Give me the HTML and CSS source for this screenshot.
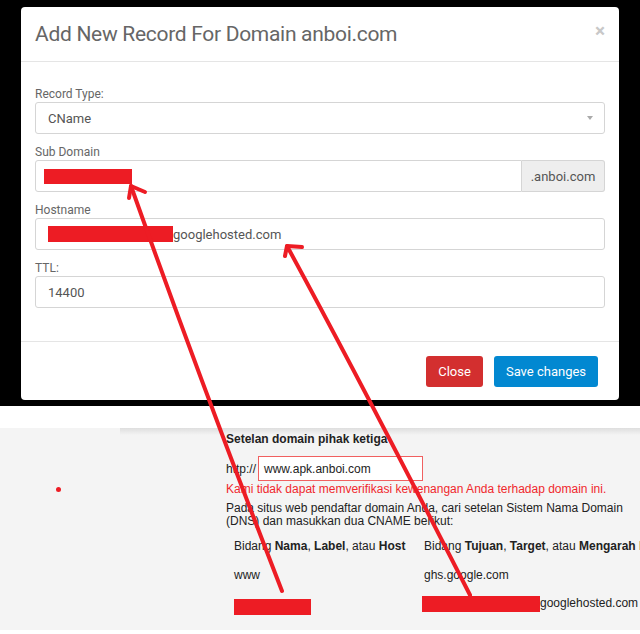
FILE: index.html
```html
<!DOCTYPE html>
<html lang="id">
<head>
  <meta charset="UTF-8">
  <title>Add New Record</title>
  <link rel="stylesheet" href="styles.css">
</head>
<body>
  <div class="backdrop">
    <div class="modal">
      <div class="modal-header">
        <h4 class="modal-title">Add New Record For Domain anboi.com</h4>
        <span class="close">&times;</span>
      </div>
      <div class="modal-body">
        <label>Record Type:</label>
        <div class="field select">
          <span>CName</span>
          <span class="caret"></span>
        </div>

        <label>Sub Domain</label>
        <div class="input-group">
          <div class="field grow"><span class="redact sub"></span></div>
          <div class="addon">.anboi.com</div>
        </div>

        <label>Hostname</label>
        <div class="field"><span class="redact host"></span><span>googlehosted.com</span></div>

        <label>TTL:</label>
        <div class="field"><span>14400</span></div>
      </div>
      <div class="modal-footer">
        <button class="btn btn-danger">Close</button>
        <button class="btn btn-primary">Save changes</button>
      </div>
    </div>
  </div>

  <div class="gap"></div>

  <div class="page">
    <div class="panel">
      <div class="heading">Setelan domain pihak ketiga</div>
      <div class="url-row">
        <span>http://</span>
        <div class="url-input">www.apk.anboi.com</div>
      </div>
      <div class="error">Kami tidak dapat memverifikasi kewenangan Anda terhadap domain ini.</div>
      <p class="info">Pada situs web pendaftar domain Anda, cari setelan Sistem Nama Domain (DNS) dan masukkan dua CNAME berikut:</p>
      <div class="cname-table">
        <div>Bidang <b>Nama</b>, <b>Label</b>, atau <b>Host</b></div>
        <div>Bidang <b>Tujuan</b>, <b>Target</b>, atau <b>Mengarah ke</b></div>
        <div>www</div>
        <div>ghs.google.com</div>
        <div><span class="redact name"></span></div>
        <div><span class="redact target"></span>googlehosted.com</div>
      </div>
    </div>
  </div>

  <span class="dot"></span>

  <svg class="arrows" width="640" height="634" viewBox="0 0 640 634">
    <g fill="none" stroke="#ed1c24" stroke-width="4" stroke-linecap="round" stroke-linejoin="round">
      <path d="M282 591 Q 200 380 131 186"/>
      <path d="M145 192 L131 186 L129 198"/>
      <path d="M470 595 Q 360 380 287 246"/>
      <path d="M302 247 L287 246 L285 256"/>
    </g>
  </svg>
</body>
</html>
```

FILE: styles.css
```css
html, body {
  margin: 0;
  padding: 0;
  width: 640px;
  height: 634px;
  overflow: hidden;
  background: #fff;
  position: relative;
}

.backdrop {
  background: #000;
  height: 406px;
  padding: 7px 21px 0;
  box-sizing: border-box;
}

.modal {
  background: #fff;
  border-radius: 4px;
  height: 393px;
  font-family: Roboto, "Liberation Sans", sans-serif;
  display: flex;
  flex-direction: column;
}

.modal-header {
  height: 54px;
  border-bottom: 1px solid #e5e5e5;
  display: flex;
  align-items: center;
  justify-content: space-between;
  padding: 0 14px;
}

.modal-title {
  margin: 0;
  font-size: 21px;
  font-weight: 400;
  color: #666;
  letter-spacing: -0.3px;
}

.close {
  color: #c8c8c8;
  font-size: 19px;
  font-weight: bold;
  margin-top: -8px;
}

.modal-body {
  padding: 25px 14px 0;
  height: 279px;
  box-sizing: border-box;
}

.modal-body label {
  display: block;
  font-size: 12px;
  line-height: 15px;
  color: #666;
}

.field {
  height: 32px;
  box-sizing: border-box;
  border: 1px solid #d5d5d5;
  border-radius: 3px;
  margin-bottom: 11px;
  display: flex;
  align-items: center;
  padding: 0 12px;
  font-size: 13px;
  color: #555;
}

.select {
  justify-content: space-between;
  padding-right: 11px;
}

.caret {
  width: 0;
  height: 0;
  border-left: 3px solid transparent;
  border-right: 3px solid transparent;
  border-top: 4px solid #aaa;
}

.input-group {
  display: flex;
  margin-bottom: 11px;
}

.input-group .field {
  margin-bottom: 0;
  border-radius: 3px 0 0 3px;
  padding-left: 8px;
}

.grow {
  flex: 1;
}

.addon {
  width: 83px;
  height: 32px;
  box-sizing: border-box;
  background: #eee;
  border: 1px solid #d5d5d5;
  border-left: none;
  border-radius: 0 3px 3px 0;
  display: flex;
  align-items: center;
  justify-content: center;
  font-size: 13px;
  color: #555;
}

.redact {
  display: inline-block;
  background: #ed1c24;
}

.redact.sub {
  width: 88px;
  height: 15px;
}

.redact.host {
  width: 125px;
  height: 16px;
}

.modal-footer {
  border-top: 1px solid #e5e5e5;
  flex: 1;
  display: flex;
  justify-content: flex-end;
  align-items: flex-start;
  gap: 11px;
  padding: 14px 21px 0;
}

.btn {
  height: 31px;
  border: none;
  border-radius: 3px;
  color: #fff;
  font-family: Roboto, "Liberation Sans", sans-serif;
  font-size: 13px;
  padding: 0;
  white-space: nowrap;
}

.btn-danger {
  background: #d32f2f;
  width: 57px;
}

.btn-primary {
  background: #0288d1;
  width: 104px;
}

.gap {
  height: 22px;
}

.page {
  background: #f4f4f4;
  height: 202px;
}

.panel {
  margin-left: 120px;
  height: 100%;
  background: linear-gradient(#dedede, #f4f4f4 7px);
  padding: 4px 0 0 106px;
  box-sizing: border-box;
  font-family: "Liberation Sans", Arial, sans-serif;
  font-size: 12px;
  color: #222;
}

.heading {
  font-weight: bold;
  line-height: 15px;
}

.url-row {
  display: flex;
  align-items: center;
  gap: 2px;
  margin-top: 9px;
}

.url-input {
  width: 165px;
  height: 25px;
  box-sizing: border-box;
  border: 1px solid #f06060;
  background: #fff;
  padding: 0 5px;
  display: flex;
  align-items: center;
}

.error {
  color: #f0282d;
  line-height: 15px;
  margin-top: 1px;
}

.info {
  margin: 5px 0 0;
  width: 405px;
  line-height: 13px;
}

.cname-table {
  display: grid;
  grid-template-columns: 190px auto;
  grid-auto-rows: 29px;
  padding-left: 8px;
  margin-top: 3px;
  white-space: nowrap;
  align-items: center;
}

.redact.name {
  width: 77px;
  height: 16px;
  vertical-align: middle;
  margin-top: 6px;
}

.redact.target {
  width: 118px;
  height: 16px;
  vertical-align: middle;
  margin-left: -2px;
}

.dot {
  position: absolute;
  left: 56px;
  top: 487px;
  width: 5px;
  height: 5px;
  border-radius: 50%;
  background: #ed1c24;
}

.arrows {
  position: absolute;
  left: 0;
  top: 0;
  pointer-events: none;
}
```
